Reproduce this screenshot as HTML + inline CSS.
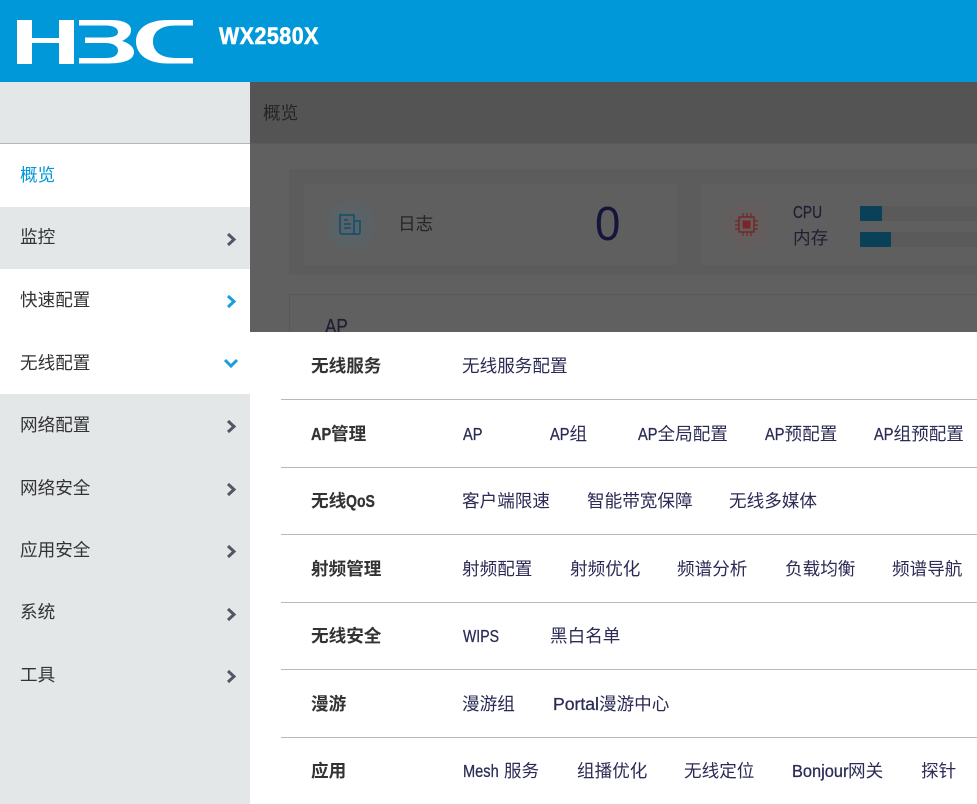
<!DOCTYPE html>
<html lang="zh-CN"><head><meta charset="utf-8"><title>WX2580X</title>
<style>
html,body{margin:0;padding:0}
body{position:relative;width:977px;height:804px;overflow:hidden;background:#606060;font-family:"Liberation Sans","Noto Sans CJK SC",sans-serif;font-size:17.6px}
div,span{position:absolute}
.t{line-height:24px;white-space:nowrap;color:#2b2b55}
.b{color:#333;font-weight:700}
.m{line-height:24px;white-space:nowrap;color:#333;left:20px}
.l{position:absolute;left:281px;width:696px;height:1px;background:#b8b8b8}
.s{left:0;width:250px;background:#e3e7e8}
i{position:static;display:inline-block;font-style:normal;transform-origin:0 50%;-webkit-text-stroke:.3px currentColor}
svg{position:absolute}
</style></head><body>
<div style="left:0;top:0;width:977px;height:82px;background:#0098d8"></div>
<svg style="left:0;top:0" width="200" height="82" fill="#fff"><path d="M17 20H32V38H59V20H74V64H59V43H32V64H17Z"/><path d="M79 20H110C126 20 131 25 131 30C131 36 126 39 122 41C129 43 134 47 134 52C134 60 124 63.5 108 63.5H79V58H106C114 58 118 55 118 50.5C118 46 113 43 105 43H85V37.5H105C113 37.5 118 36 118 32C118 28 113 25.5 106 25.5H79Z"/><path d="M193 20V25.5H176C160 25.5 153 32 153 41.5C153 51 160 58 176 58H193V63.5H168C147 63.5 136 54 136 41.5C136 29 147 20 168 20Z"/></svg>
<div style="left:219px;top:24px;font:700 24px/26px 'Liberation Sans',sans-serif;color:#fff;white-space:nowrap;letter-spacing:.6px;-webkit-text-stroke:.6px #fff;transform:scaleX(.89);transform-origin:0 50%">WX2580X</div>

<div style="left:250px;top:82px;width:727px;height:61px;background:#545454"></div>
<div style="left:250px;top:143px;width:727px;height:1px;background:#5a5a5a"></div>
<div class="t" style="left:263px;top:101px;color:#252525">概览</div>
<div style="left:289px;top:169px;width:688px;height:106px;background:#5c5c5c"></div>
<div style="left:304px;top:184px;width:373px;height:81px;background:#5f5f5f"></div>
<div style="left:702px;top:184px;width:275px;height:81px;background:#5f5f5f"></div>
<div style="left:327px;top:201px;width:48px;height:48px;border-radius:50%;background:#5a6265"></div>
<svg style="left:339px;top:213px" width="25" height="25" fill="none" stroke="#0d5070" stroke-width="1.6"><path d="M1 2H15V21H3Q1 21 1 19Z"/><path d="M15 8H21V19Q21 22 18 21"/><path d="M15 21H18"/><path d="M5 7H9M5 11H12M5 15H12"/></svg>
<div class="t" style="left:398px;top:212px;color:#252525">日志</div>
<div style="left:595px;top:197px;font:48px/56px 'Liberation Sans',sans-serif;color:#15153c;transform:scaleX(.95);transform-origin:0 50%">0</div>
<div style="left:723px;top:201px;width:48px;height:48px;border-radius:50%;background:#635e5d"></div>
<svg style="left:735px;top:213px" width="24" height="24" fill="none" stroke="#702828" stroke-width="1.5"><rect x="4" y="4" width="15" height="15"/><rect x="7.5" y="7.5" width="8" height="8" fill="#7a2626" stroke="none"/><path d="M8 0V4M12 0V4M16 0V4M8 19V23M12 19V23M16 19V23M0 8H4M0 12H4M0 16H4M19 8H23M19 12H23M19 16H23" stroke-width="1.2"/></svg>
<div class="t" style="left:793px;top:200px;color:#1f1f35"><i style="transform:scaleX(.78)">CPU</i></div>
<div class="t" style="left:793px;top:226px;color:#1f1f35">内存</div>
<div style="left:860px;top:206px;width:117px;height:15px;background:#5a5a5a"></div>
<div style="left:860px;top:206px;width:22px;height:15px;background:#0a4058"></div>
<div style="left:860px;top:232px;width:117px;height:15px;background:#5a5a5a"></div>
<div style="left:860px;top:232px;width:31px;height:15px;background:#0a4058"></div>
<div style="left:289px;top:294px;width:688px;height:1px;background:#585858"></div>
<div style="left:289px;top:294px;width:1px;height:38px;background:#585858"></div>
<div class="t" style="left:325px;top:315px;font-size:20px;color:#1f1f35"><i style="transform:scaleX(.85)">AP</i></div>

<div class="s" style="top:82px;height:61px"></div>
<div style="left:0;top:143px;width:250px;height:1px;background:#b5b5b5"></div>
<div style="left:0;top:144px;width:250px;height:63px;background:#fff"></div>
<div class="s" style="top:207px;height:62px"></div>
<div style="left:0;top:269px;width:250px;height:125px;background:#fff"></div>
<div class="s" style="top:394px;height:410px"></div>
<div class="m" style="top:163px;color:#0098d8">概览</div>
<div class="m" style="top:225px">监控</div>
<div class="m" style="top:288px">快速配置</div>
<div class="m" style="top:351px">无线配置</div>
<div class="m" style="top:413px">网络配置</div>
<div class="m" style="top:476px">网络安全</div>
<div class="m" style="top:538px">应用安全</div>
<div class="m" style="top:600px">系统</div>
<div class="m" style="top:663px">工具</div>
<svg style="left:0;top:0" width="250" height="804" fill="none" stroke-width="3"><g stroke="#555566"><path d="M228 234L234 239.5L228 245M228 421L234 426.5L228 432M228 484L234 489.5L228 495M228 546L234 551.5L228 557M228 609L234 614.5L228 620M228 671L234 676.5L228 682"/></g><g stroke="#1a9fdc"><path d="M228 296L234 301.5L228 307M225 360L231 366L237 360"/></g></svg>

<div style="left:250px;top:332px;width:727px;height:472px;background:#fff"></div>
<div class="l" style="top:399px"></div><div class="l" style="top:467px"></div><div class="l" style="top:534px"></div><div class="l" style="top:602px"></div><div class="l" style="top:669px"></div><div class="l" style="top:737px"></div>

<div class="t b" style="left:311px;top:354px">无线服务</div><div class="t" style="left:462px;top:354px">无线服务配置</div>
<div class="t b" style="left:311px;top:422px"><i style="width:20px;transform:scaleX(.83)">AP</i>管理</div><div class="t" style="left:463px;top:422px"><i style="transform:scaleX(.83)">AP</i></div><div class="t" style="left:550px;top:422px"><i style="width:19.5px;transform:scaleX(.83)">AP</i>组</div><div class="t" style="left:638px;top:422px"><i style="width:19.5px;transform:scaleX(.83)">AP</i>全局配置</div><div class="t" style="left:765px;top:422px"><i style="width:19.5px;transform:scaleX(.83)">AP</i>预配置</div><div class="t" style="left:874px;top:422px"><i style="width:19.5px;transform:scaleX(.83)">AP</i>组预配置</div>
<div class="t b" style="left:311px;top:489px">无线<i style="width:30px;transform:scaleX(.8)">QoS</i></div><div class="t" style="left:462px;top:489px">客户端限速</div><div class="t" style="left:587px;top:489px">智能带宽保障</div><div class="t" style="left:729px;top:489px">无线多媒体</div>
<div class="t b" style="left:311px;top:557px">射频管理</div><div class="t" style="left:462px;top:557px">射频配置</div><div class="t" style="left:570px;top:557px">射频优化</div><div class="t" style="left:677px;top:557px">频谱分析</div><div class="t" style="left:785px;top:557px">负载均衡</div><div class="t" style="left:892px;top:557px">频谱导航</div>
<div class="t b" style="left:311px;top:624px">无线安全</div><div class="t" style="left:463px;top:624px"><i style="transform:scaleX(.8)">WIPS</i></div><div class="t" style="left:550px;top:624px">黑白名单</div>
<div class="t b" style="left:311px;top:692px">漫游</div><div class="t" style="left:462px;top:692px">漫游组</div><div class="t" style="left:553px;top:692px"><i>Portal</i>漫游中心</div>
<div class="t b" style="left:311px;top:759px">应用</div><div class="t" style="left:463px;top:759px"><i style="width:36px;transform:scaleX(.83)">Mesh</i> 服务</div><div class="t" style="left:577px;top:759px">组播优化</div><div class="t" style="left:684px;top:759px">无线定位</div><div class="t" style="left:792px;top:759px"><i style="width:56px;transform:scaleX(.93)">Bonjour</i>网关</div><div class="t" style="left:921px;top:759px">探针</div>
</body></html>
